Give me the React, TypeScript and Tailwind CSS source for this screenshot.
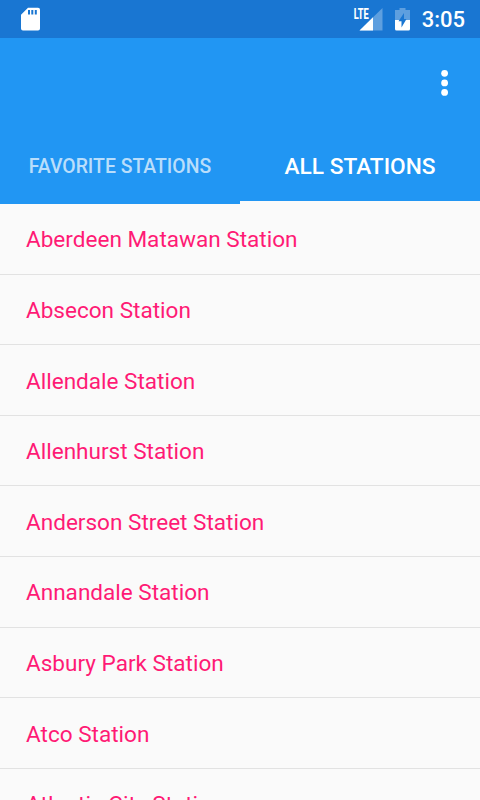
const stations = [
  'Aberdeen Matawan Station',
  'Absecon Station',
  'Allendale Station',
  'Allenhurst Station',
  'Anderson Street Station',
  'Annandale Station',
  'Asbury Park Station',
  'Atco Station',
  'Atlantic City Station',
]

function StatusBar() {
  return (
    <div className="h-[38px] bg-[#1976d2] flex items-center justify-between pl-[21px] pr-[15px]">
      <svg width="19" height="24" viewBox="0 0 19 24">
        <path
          fill="#fff"
          fillRule="evenodd"
          d="M7 .7H17a2 2 0 0 1 2 2V21.5a2 2 0 0 1-2 2H2a2 2 0 0 1-2-2V7.7ZM7 3V7.5H9V3ZM10.3 3V7.5H12.3V3ZM13.8 3V7.5H15.8V3Z"
        />
      </svg>
      <div className="flex items-center">
        <svg className="overflow-visible" width="30" height="24" viewBox="0 0 30 24">
          <path fill="#fff" fillOpacity=".3" d="M29.5 1V23.5H6.5Z" />
          <path fill="#fff" d="M20 10.3V23.5H6.5Z" />
          <path fill="#1976d2" d="M0 1H16V12H0Z" />
          <text transform="translate(0.7 11.5) scale(0.66 1)" fontFamily="Roboto" fontSize="14" fontWeight="800" fill="#fff">
            LTE
          </text>
        </svg>
        <svg className="ml-3" width="15" height="24" viewBox="0 0 15 24">
          <path fill="#fff" fillOpacity=".3" d="M4.5 1H10.5V3H15V13H0V3H4.5Z" />
          <path fill="#fff" d="M0 13H15V22a1.5 1.5 0 0 1-1.5 1.5H1.5A1.5 1.5 0 0 1 0 22Z" />
          <path fill="#1976d2" d="M9 6 3.5 14.3H6.5V20.5L11.5 12H9Z" />
        </svg>
        <span className="ml-3 pt-0.5 text-[22px] leading-6 font-medium text-white">3:05</span>
      </div>
    </div>
  )
}

export default function App() {
  return (
    <div className="h-[800px] w-[480px] overflow-hidden bg-[#fafafa] font-['Roboto',sans-serif]">
      <StatusBar />
      <header className="h-[166px] bg-[#2196f3] flex flex-col text-white">
        <div className="h-[90px] flex items-center justify-end pr-[31px]">
          <svg width="8" height="28" viewBox="0 0 8 28" fill="#fff">
            <circle cx="3.6" cy="4.3" r="3.4" />
            <circle cx="3.6" cy="13.9" r="3.4" />
            <circle cx="3.6" cy="23.4" r="3.4" />
          </svg>
        </div>
        <nav className="flex flex-1">
          <button className="w-1/2 pt-0.5 text-[19.4px] font-medium text-white/70">FAVORITE STATIONS</button>
          <button className="w-1/2 border-b-[3px] border-[#fafafa] pt-1.5 text-[22.7px] font-medium">ALL STATIONS</button>
        </nav>
      </header>
      <ul>
        {stations.map((station) => (
          <li key={station} className="h-[70.6px] border-b border-[#e2e2e2] pl-[26px] pt-[3px] flex items-center text-[22.55px] text-[#ff1a75]">
            {station}
          </li>
        ))}
      </ul>
    </div>
  )
}
